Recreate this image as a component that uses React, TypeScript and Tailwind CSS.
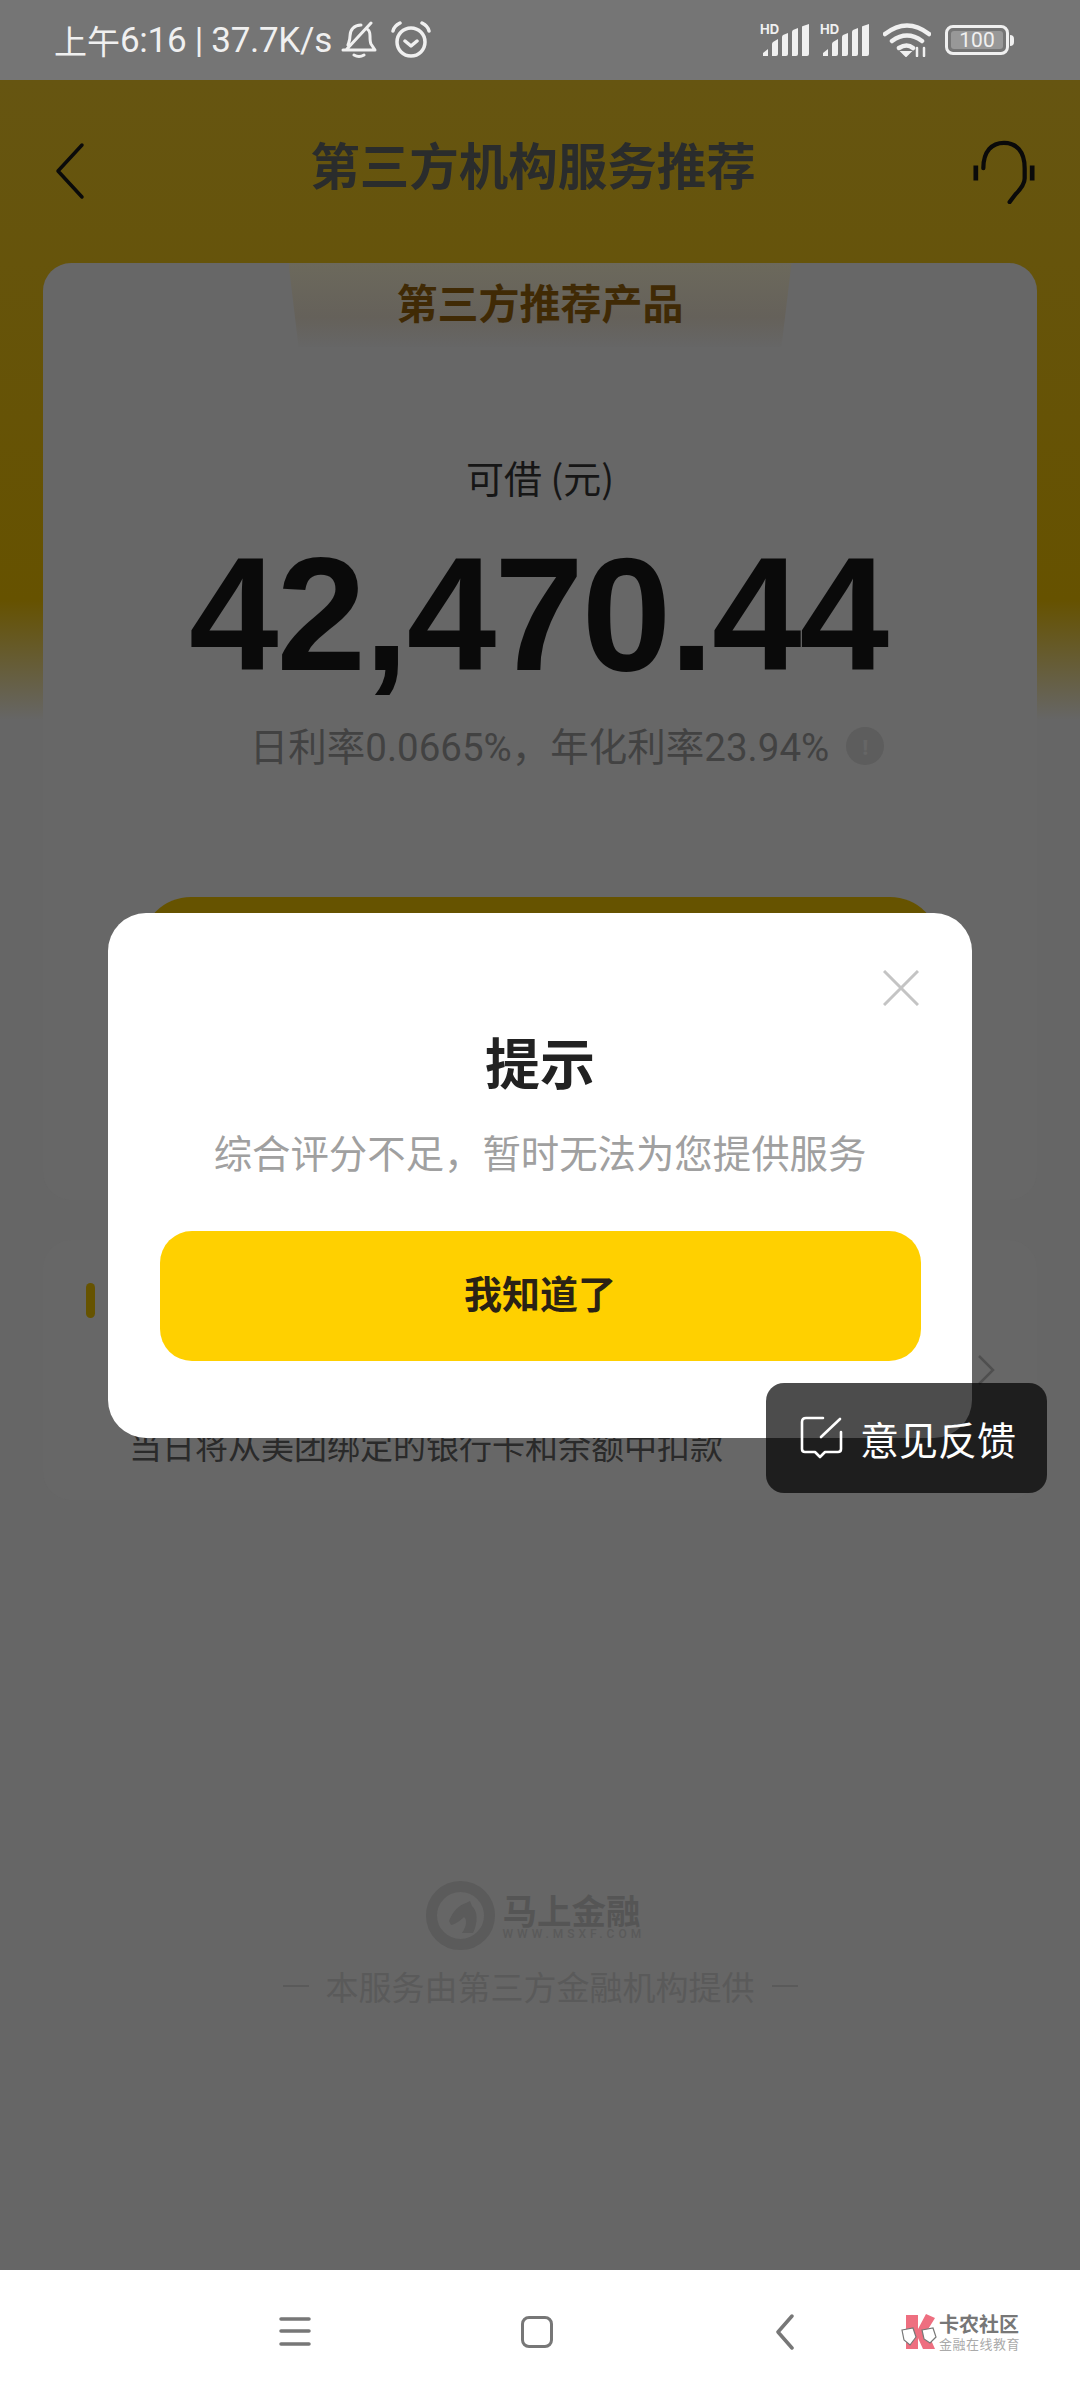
const cjk = "font-['Noto_Sans_CJK_SC','Noto_Sans',sans-serif]";

function SignalIcon() {
  return (
    <div className="relative w-[50px] h-[32px]">
      <span className="absolute left-0 top-[-3px] font-['Inter',sans-serif] text-[13px] leading-[16px] font-bold text-[#f0f0f0]">HD</span>
      <svg width="50" height="32" viewBox="0 0 50 32" fill="#f0f0f0">
        <path d="M3 32v-3l5-4v7zM12 32V20q0-1 1-2l5-3v15q0 2-2 2zM22 32V13q0-1 1-2l5-2v21q0 2-2 2zM32 32V8q0-1 1-2l5-2v26q0 2-2 2zM42 32V3q0-1 1-1l6-2v30q0 2-2 2z" />
      </svg>
    </div>
  );
}

function StatusBar() {
  return (
    <div className="h-20 bg-[#757575] flex items-center justify-between pl-[54px] pr-[66px] text-[#f0f0f0]">
      <div className="flex items-center">
        <span className={`${cjk} text-[33px] leading-none`}>上午</span>
        <span className="font-['Roboto',sans-serif] text-[35px] leading-none whitespace-pre tracking-[-0.3px]">6:16 | 37.7K/s</span>
        <svg className="ml-[9px]" width="36" height="38" viewBox="0 0 36 38" fill="none" stroke="#f0f0f0" strokeWidth="3" strokeLinecap="round" strokeLinejoin="round">
          <path d="M2 29h32l-4-6c-1-2-1-4-1-8 0-3-1-6-3-7M7 24c1-3 2-5 2-9 0-6 4-11 11-11M30 2 5 29M13 34q5 3 10 0" />
        </svg>
        <svg className="ml-[14px]" width="40" height="40" viewBox="0 0 40 40" fill="none" stroke="#f0f0f0" strokeWidth="3.5" strokeLinecap="round" strokeLinejoin="round">
          <circle cx="20" cy="22" r="14" />
          <path d="M14 21l6 5 6-5M2 11q1-5 7-8M38 11q-1-5-7-8" />
        </svg>
      </div>
      <div className="flex items-center">
        <SignalIcon />
        <div className="ml-[10px]">
          <SignalIcon />
        </div>
        <svg className="ml-[13px]" width="48" height="34" viewBox="0 0 48 34" fill="none" stroke="#f0f0f0" strokeWidth="4.5" strokeLinecap="round">
          <path d="M2 11q22-17 44 0M9 18q15-11 30 0M16 25q8-5 14 0" />
          <path d="M19 29l4 4 4-4z" fill="#f0f0f0" strokeWidth="2" />
          <path d="M34 33v-8M41 25v8" strokeWidth="2.5" />
        </svg>
        <div className="ml-[14px] flex items-center">
          <div className="w-[64px] h-[30px] border-[3px] border-[#f0f0f0] rounded-[8px] p-[3px] flex">
            <div className="flex-1 bg-[#989898] rounded-[3px] flex items-center justify-center font-['Roboto',sans-serif] text-[21px] leading-none text-[#f0f0f0]">100</div>
          </div>
          <div className="ml-[1px] w-[4px] h-[11px] rounded-r-sm bg-[#f0f0f0]" />
        </div>
      </div>
    </div>
  );
}

function Header() {
  return (
    <div className="h-[183px] relative flex justify-between pl-[55px] pr-[45px] pt-[60px]">
      <svg width="30" height="62" viewBox="0 0 30 62" fill="none" stroke="#0a0a0a" strokeWidth="3.5" strokeLinecap="round" strokeLinejoin="round">
        <path d="M27 5 3 31l24 26" />
      </svg>
      <div className={`${cjk} absolute left-0 right-[14px] top-[55px] text-center text-[49.5px] leading-[58px] font-bold text-[#2a2c2c]`}>第三方机构服务推荐</div>
      <svg width="62" height="64" viewBox="0 0 66 68" fill="none" stroke="#0a0a0a" strokeWidth="4.5" strokeLinecap="round">
        <path d="M11 30C11 12 20 3 33 3s22 9 22 27v11c0 6-4 11-10 17l-6 8" />
        <path d="M3 27v16M63 27v16" strokeWidth="5" strokeLinecap="butt" />
      </svg>
    </div>
  );
}

function MainCard() {
  return (
    <div className="mx-[43px] h-[937px] bg-[#676767] rounded-[28px] flex flex-col items-center">
      <div className="w-[503px] h-[84px] pt-[13px] bg-[linear-gradient(180deg,#6c695c,#65615a_65%,#666666)] [clip-path:polygon(0_0,100%_0,98%_100%,2%_100%)] flex justify-center">
        <span className={`${cjk} text-[41px] leading-[50px] font-bold text-[#402a05]`}>第三方推荐产品</span>
      </div>
      <div className={`${cjk} mt-[105px] text-[38px] leading-[50px] text-[#161616]`}>可借 (元)</div>
      <div className="mt-[17px] mr-[4px] font-['Liberation_Sans',sans-serif] text-[161px] leading-[190px] font-bold tracking-[-2px] text-[#0a0a0a]">42,470.44</div>
      <div className="mt-[10px] ml-[54px] flex items-center">
        <span className={`${cjk} text-[38.5px] leading-[50px] text-[#424242]`}>
          日利率<span className="font-['Roboto',sans-serif]">0.0665%</span>，年化利率<span className="font-['Roboto',sans-serif]">23.94%</span>
        </span>
        <div className="ml-[17px] w-[38px] h-[38px] rounded-full bg-[#5d5d5d] flex items-center justify-center text-[#666666] text-[22px] leading-none font-bold">!</div>
      </div>
      <div className="mt-[124px] w-[799px] h-[130px] rounded-[50px] bg-[#665300]" />
    </div>
  );
}

function RepayCard() {
  return (
    <div className="mx-[43px] mt-[40px] h-[260px] bg-[#676767] rounded-[28px] relative pl-[43px] pt-[43px]">
      <div className="w-[9px] h-[35px] rounded-full bg-[#665300]" />
      <svg className="absolute right-[42px] top-[114px]" width="18" height="32" viewBox="0 0 18 32" fill="none" stroke="#4f4f4f" strokeWidth="2.5">
        <path d="m2 2 14 14L2 30" />
      </svg>
      <div className={`${cjk} ml-[43px] mt-[106px] text-[33px] leading-[42px] text-[#2a2a2a] whitespace-nowrap`}>当日将从美团绑定的银行卡和余额中扣款</div>
    </div>
  );
}

function Footer() {
  return (
    <div className="mt-[381px] flex flex-col items-center text-[#5a5a5a]">
      <div className="flex items-center mr-[14px]">
        <svg width="69" height="69" viewBox="0 0 69 69">
          <circle cx="34.5" cy="34.5" r="29" fill="none" stroke="#5b5b5b" strokeWidth="11" />
          <path d="M23 40c4-10 10-16 17-18l4-2 2 5c6 5 6 17 1 27H36c5-7 5-14 2-16-4 4-10 8-13 8z" fill="#5b5b5b" />
        </svg>
        <div className="ml-[8px] flex flex-col w-[138px]">
          <span className={`${cjk} text-[34.5px] leading-[36px] font-bold text-[#555555]`}>马上金融</span>
          <span className="font-['Roboto',sans-serif] text-[12px] leading-[14px] tracking-[4px] font-medium whitespace-nowrap">WWW.MSXF.COM</span>
        </div>
      </div>
      <div className={`${cjk} mt-[15px] flex items-center text-[33px] leading-[42px]`}>
        <span className="w-[26px] h-[2px] bg-[#5a5a5a]" />
        <span className="mx-[17px]">本服务由第三方金融机构提供</span>
        <span className="w-[26px] h-[2px] bg-[#5a5a5a]" />
      </div>
    </div>
  );
}

function NavBar() {
  return (
    <div className="h-[130px] bg-white relative flex items-center text-[#777777] pl-[279px] pb-[6px]">
      <svg width="32" height="30" viewBox="0 0 32 30" fill="none" stroke="#777777" strokeWidth="3.5" strokeLinecap="round">
        <path d="M2 2h28M2 14h28M2 27h28" />
      </svg>
      <div className="ml-[210px] w-[32px] h-[32px] rounded-[8px] border-[3.5px] border-[#777777]" />
      <svg className="ml-[222px]" width="20" height="36" viewBox="0 0 20 36" fill="none" stroke="#777777" strokeWidth="3.5" strokeLinecap="round" strokeLinejoin="round">
        <path d="M17 2 3 18l14 16" />
      </svg>
      <svg className="ml-[106px]" width="36" height="36" viewBox="0 0 36 36">
        <path d="M5 1h12v14L25 0l9 4-8 13 8 18H22l-5-11v11H5z" fill="#ee6f80" />
        <path d="M1 16l11-2 3 9-6 8-6-5zM21 16l11-2 3 9-6 6-6-4z" fill="#ffffff" stroke="#777777" strokeWidth="1.2" />
      </svg>
      <div className="ml-[2px] flex flex-col items-start">
        <span className={`${cjk} text-[20px] leading-[22px] font-bold whitespace-nowrap`}>卡农社区</span>
        <span className={`${cjk} mt-[2px] text-[13px] leading-[14px] tracking-[0.5px] text-[#aaaaaa] whitespace-nowrap`}>金融在线教育</span>
      </div>
    </div>
  );
}

function Modal() {
  return (
    <div className="absolute left-[108px] top-[833px] w-[864px] h-[525px] bg-white rounded-[38px] flex flex-col items-center">
      <svg className="absolute right-[53px] top-[57px]" width="36" height="36" viewBox="0 0 36 36" fill="none" stroke="#c4c4c4" strokeWidth="3">
        <path d="m1 1 34 34M35 1 1 35" />
      </svg>
      <div className={`${cjk} mt-[112px] text-[55px] leading-[70px] font-bold text-[#222222]`}>提示</div>
      <div className={`${cjk} mt-[30px] text-[38.4px] leading-[52px] text-[#a0a0a0] whitespace-nowrap`}>综合评分不足，暂时无法为您提供服务</div>
      <div className="mt-[54px] w-[761px] h-[130px] rounded-[32px] bg-[#ffd000] flex items-center justify-center pb-[8px]">
        <span className={`${cjk} text-[38px] leading-[50px] font-bold text-[#2a2215]`}>我知道了</span>
      </div>
    </div>
  );
}

function FeedbackButton() {
  return (
    <div className="absolute left-[766px] top-[1303px] w-[281px] h-[110px] rounded-[18px] bg-black/70 flex items-center pl-[34px]">
      <svg width="44" height="44" viewBox="0 0 44 44" fill="none" stroke="#ffffff" strokeWidth="2.6" strokeLinecap="round" strokeLinejoin="round">
        <path d="M23 2H6Q2 2 2 6v27q0 3 3 3h10l5 5 5-5h13q3 0 3-3V16" />
        <path d="M40 3 21 21" />
      </svg>
      <span className={`${cjk} ml-[16px] text-[39px] leading-[50px] text-white whitespace-nowrap`}>意见反馈</span>
    </div>
  );
}

export default function App() {
  return (
    <div className="w-[1080px] h-[2400px] flex flex-col overflow-hidden">
      <StatusBar />
      <div className="h-[2190px] relative bg-[linear-gradient(180deg,#665511_0,#665200_520px,#666666_640px)]">
        <Header />
        <MainCard />
        <RepayCard />
        <Footer />
        <Modal />
        <FeedbackButton />
      </div>
      <NavBar />
    </div>
  );
}
